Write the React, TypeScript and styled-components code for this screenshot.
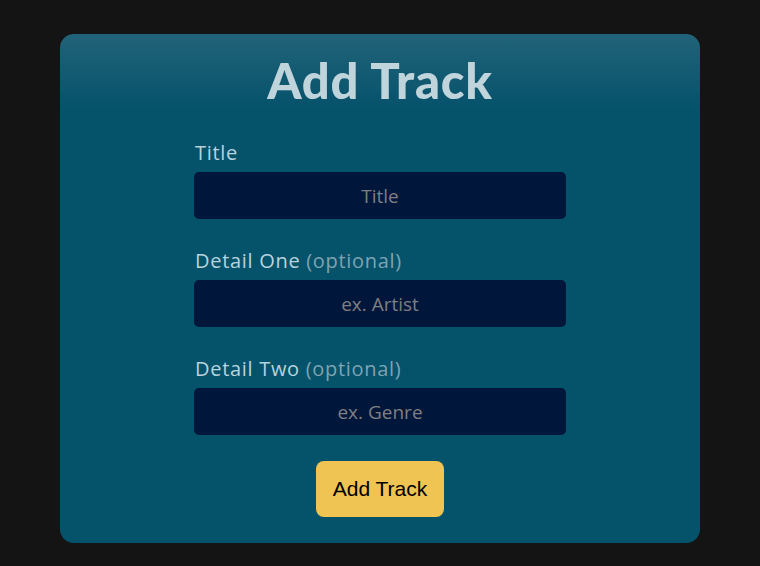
import React from "react";
import styled, { createGlobalStyle } from "styled-components";

const Global = createGlobalStyle`
  html, body { margin: 0; padding: 0; background: #141414; }
  body { font-family: "Lato", "Noto Sans", sans-serif; }
  * { box-sizing: border-box; }
`;

const Page = styled.div`
  padding-top: 34px;
  display: flex;
  justify-content: center;
`;

const Card = styled.div`
  width: 640px;
  border-radius: 14px;
  background: linear-gradient(180deg, #216379 0px, #05526b 76px, #05526b 100%);
  padding: 15px 0 26px;
  display: flex;
  flex-direction: column;
  align-items: center;
`;

const Heading = styled.h1`
  margin: 0;
  font-family: "Lato", sans-serif;
  font-weight: 900;
  font-size: 49px;
  line-height: 62px;
  color: #c0d4dc;
  letter-spacing: 0.8px;
`;

const Form = styled.form`
  width: 372px;
  margin-top: 30px;
  display: flex;
  flex-direction: column;
  align-items: stretch;
`;

const Field = styled.div`
  display: flex;
  flex-direction: column;
  margin-bottom: 30px;
  &:last-of-type { margin-bottom: 26px; }
`;

const Label = styled.label`
  font-family: "Open Sans", sans-serif;
  font-size: 20px;
  line-height: 24px;
  letter-spacing: 0.7px;
  color: #b8d3dc;
  margin-bottom: 7px;
  padding-left: 1px;
`;

const Optional = styled.span`
  color: #7ea4b1;
`;

const Input = styled.input`
  height: 47px;
  width: 100%;
  border: none;
  border-radius: 5px;
  background: #00163a;
  color: #c0c0c0;
  font-family: "Open Sans", sans-serif;
  font-size: 19px;
  text-align: center;
  outline: none;
  &::placeholder { color: #7f7f82; }
`;

const Button = styled.button`
  align-self: center;
  width: 128px;
  height: 56px;
  border: none;
  border-radius: 8px;
  background: #efc452;
  color: #000;
  font-family: "Liberation Sans", Arial, sans-serif;
  font-size: 21px;
  cursor: pointer;
`;

export default function App() {
  return (
    <>
      <Global />
      <Page>
        <Card>
          <Heading>Add Track</Heading>
          <Form onSubmit={(e) => e.preventDefault()}>
            <Field>
              <Label>Title</Label>
              <Input placeholder="Title" />
            </Field>
            <Field>
              <Label>
                Detail One <Optional>(optional)</Optional>
              </Label>
              <Input placeholder="ex. Artist" />
            </Field>
            <Field>
              <Label>
                Detail Two <Optional>(optional)</Optional>
              </Label>
              <Input placeholder="ex. Genre" />
            </Field>
            <Button type="submit">Add Track</Button>
          </Form>
        </Card>
      </Page>
    </>
  );
}
